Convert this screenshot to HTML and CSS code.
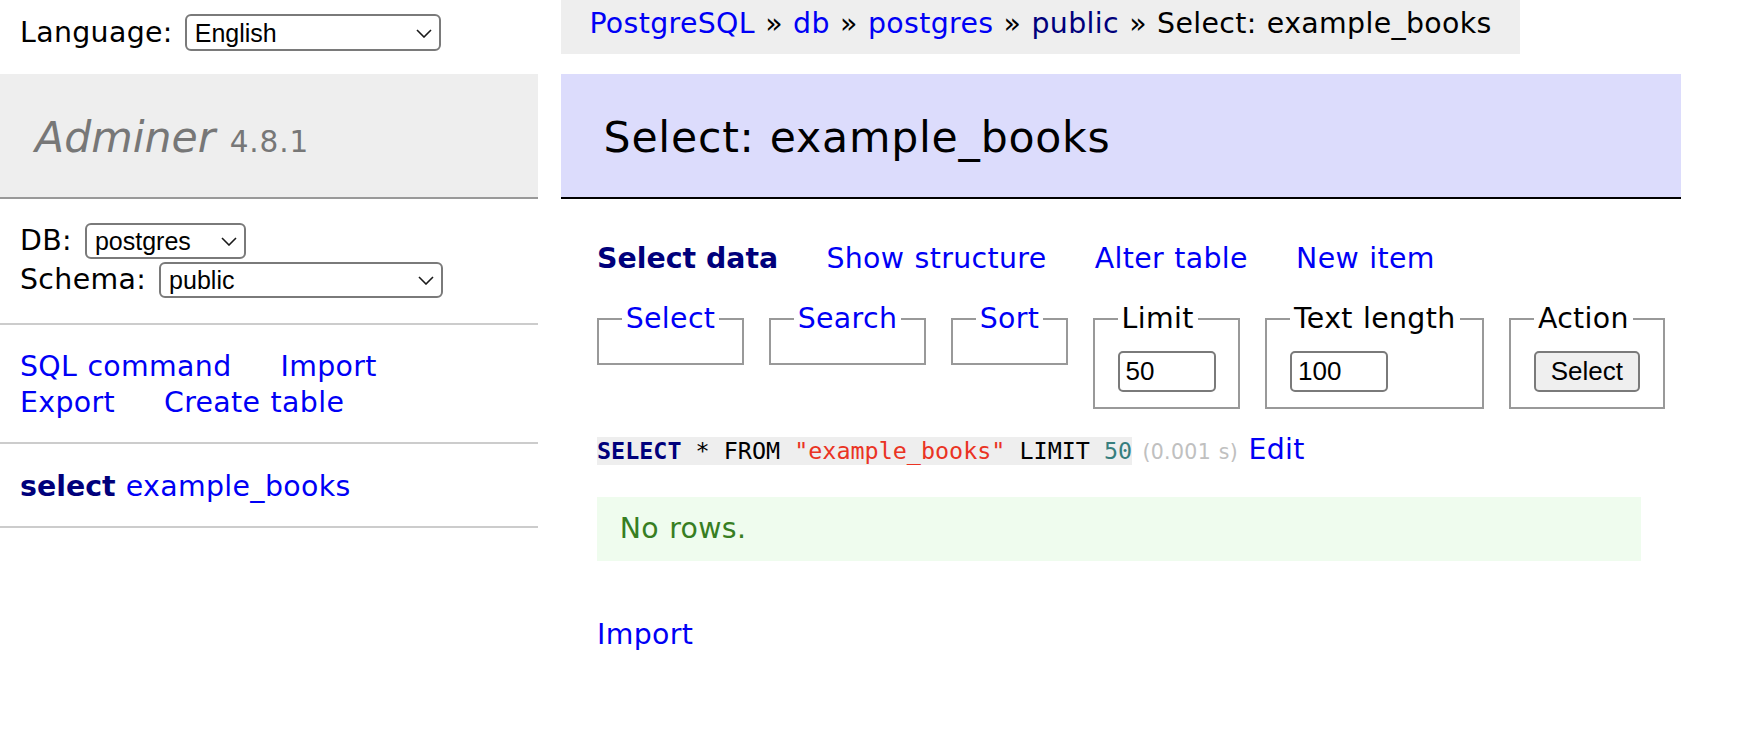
FILE: index.html
```html
<!DOCTYPE html>
<html lang="en">
<head>
<meta charset="utf-8">
<title>Select: example_books - postgres - Adminer</title>
<link rel="stylesheet" href="styles.css">
</head>
<body>
<div class="page">
  <aside class="side">
    <form class="lang">
      <label class="lang-label" for="lang">Language:</label>
      <span class="sel sel-lang">
        <select id="lang"><option>English</option></select>
        <svg class="chev" viewBox="0 0 16 9"><path d="M1 1 L8 8 L15 1"/></svg>
      </span>
    </form>
    <div class="menu">
      <h1 class="brand"><a class="brand-name" href="#">Adminer</a> <span class="version">4.8.1</span></h1>
      <form class="menu-block dbs">
        <div class="dbs-row">
          <span>DB:</span>
          <span class="sel sel-db">
            <select><option>postgres</option></select>
            <svg class="chev" viewBox="0 0 16 9"><path d="M1 1 L8 8 L15 1"/></svg>
          </span>
        </div>
        <div class="dbs-row">
          <span>Schema:</span>
          <span class="sel sel-schema">
            <select><option>public</option></select>
            <svg class="chev" viewBox="0 0 16 9"><path d="M1 1 L8 8 L15 1"/></svg>
          </span>
        </div>
      </form>
      <div class="menu-block">
        <div class="menu-links">
          <a href="#">SQL command</a>
          <a href="#">Import</a>
          <a href="#">Export</a>
          <a href="#">Create table</a>
        </div>
      </div>
      <div class="menu-block tables">
        <a href="#" class="active visited">select</a> <a href="#">example_books</a>
      </div>
    </div>
  </aside>
  <main class="main">
    <p class="breadcrumb"><a href="#">PostgreSQL</a> &raquo; <a href="#">db</a> &raquo; <a href="#">postgres</a> &raquo; <a href="#" class="visited">public</a> &raquo; Select: example_books</p>
    <h2 class="title">Select: example_books</h2>
    <div class="inner">
      <p class="tabs"><a href="#" class="active visited">Select data</a> <a href="#">Show structure</a> <a href="#">Alter table</a> <a href="#">New item</a></p>
      <form class="select-form">
        <fieldset class="fs fs-empty"><legend><a href="#">Select</a></legend></fieldset>
        <fieldset class="fs fs-empty"><legend><a href="#">Search</a></legend></fieldset>
        <fieldset class="fs fs-empty"><legend><a href="#">Sort</a></legend></fieldset>
        <fieldset class="fs"><legend>Limit</legend><input type="text" class="size" value="50"></fieldset>
        <fieldset class="fs"><legend>Text length</legend><input type="text" class="size" value="100"></fieldset>
        <fieldset class="fs"><legend>Action</legend><input type="submit" class="btn" value="Select"></fieldset>
      </form>
      <p class="sql"><code class="code"><a href="#" class="kw">SELECT</a> * FROM <span class="quo">"example_books"</span> LIMIT <span class="num">50</span></code> <span class="time">(0.001 s)</span> <a href="#">Edit</a></p>
      <p class="message">No rows.</p>
      <div class="import"><a href="#">Import</a></div>
    </div>
  </main>
</div>
</body>
</html>
```

FILE: styles.css
```css
html, body {
  margin: 0;
  padding: 0;
}

body {
  font-family: "DejaVu Sans", Verdana, sans-serif;
  font-size: 28.4px;
  line-height: 36px;
  letter-spacing: 0.012em;
  word-spacing: 0.03em;
  color: #000;
  background: #fff;
}

a {
  color: #0000f5;
  text-decoration: none;
}

a.visited {
  color: #00007b;
}

.active {
  font-weight: bold;
  letter-spacing: 0;
  word-spacing: 0;
}

.page {
  display: grid;
  grid-template-columns: 561px 1120px;
  align-items: start;
}

/* ---------- left column ---------- */

.lang {
  display: flex;
  align-items: center;
  gap: 12px;
  height: 37px;
  padding: 14px 20px 23px;
  margin: 0;
}

.sel {
  position: relative;
  display: inline-block;
}

.sel select {
  -webkit-appearance: none;
  appearance: none;
  box-sizing: border-box;
  display: block;
  height: 36px;
  margin: 0;
  padding: 0 30px 0 8px;
  border: 2px solid #7a7a7a;
  border-radius: 6px;
  background: #fff;
  color: #000;
  font-family: "Liberation Sans", Arial, sans-serif;
  font-size: 25px;
  letter-spacing: 0;
}

.sel-lang select {
  width: 256px;
  height: 37px;
}

.sel-db select {
  width: 161px;
}

.sel-schema select {
  width: 284px;
}

.chev {
  position: absolute;
  right: 9px;
  top: 50%;
  width: 16px;
  height: 9px;
  margin-top: -4px;
  fill: none;
  stroke: #1a1a1a;
  stroke-width: 1.6;
}

.menu {
  width: 538px;
}

.brand {
  margin: 0;
  padding: 37px 20px 33px 35px;
  background: #eee;
  border-bottom: 2px solid #999;
  font-size: 42.6px;
  line-height: 53.25px;
  font-weight: normal;
  letter-spacing: 0;
}

.brand-name {
  color: #777;
  font-style: italic;
}

.version {
  color: #777;
  font-size: 29.5px;
  line-height: 20px;
  letter-spacing: 0.03em;
}

.menu-block {
  margin: 0;
  padding: 24.5px 20px 21px;
  border-bottom: 2px solid #ccc;
}

.dbs {
  padding-top: 22.7px;
  padding-bottom: 22.7px;
}

.dbs-row {
  display: flex;
  align-items: center;
  gap: 13px;
  height: 39px;
}

.menu-links {
  display: flex;
  flex-wrap: wrap;
  column-gap: 49px;
  max-width: 470px;
}

.menu-links a {
  white-space: nowrap;
}

/* ---------- right column ---------- */

.main {
  min-width: 0;
}

.breadcrumb {
  width: fit-content;
  margin: 0 0 20px;
  height: 54px;
  padding: 0 28.4px;
  line-height: 47px;
  background: #eee;
  white-space: nowrap;
}

.title {
  margin: 0;
  padding: 37px 42.6px 33px;
  background: #dcdcfc;
  border-bottom: 2px solid #000;
  font-size: 42.6px;
  line-height: 53.25px;
  font-weight: normal;
  letter-spacing: 0.018em;
}

.inner {
  padding-left: 36px;
}

.tabs {
  margin: 42px 0 0;
}

.tabs a {
  margin-right: 38px;
  white-space: nowrap;
}

.select-form {
  display: flex;
  align-items: flex-start;
  gap: 25px;
  margin: 24px 0 0;
}

.fs {
  margin: 0;
  padding: 14.2px 22.7px;
  border: 2px solid #999;
  min-width: 0;
}

.fs-empty {
  padding-bottom: 12px;
}

.fs legend {
  padding: 0 4px;
  line-height: 36px;
}

.size {
  display: block;
  box-sizing: border-box;
  width: 98px;
  height: 41px;
  margin: 0;
  padding: 0 6px;
  border: 2px solid #7a7a7a;
  border-radius: 5px;
  background: #fff;
  font-family: "Liberation Sans", Arial, sans-serif;
  font-size: 26px;
  letter-spacing: 0;
  color: #000;
}

.btn {
  display: block;
  box-sizing: border-box;
  width: 106px;
  height: 41px;
  margin: 0;
  padding: 0;
  border: 2px solid #7a7a7a;
  border-radius: 5px;
  background: #efefef;
  font-family: "Liberation Sans", Arial, sans-serif;
  font-size: 26px;
  letter-spacing: 0;
  color: #000;
}

.sql {
  margin: 23.6px 0 0;
}

.code {
  font-family: "DejaVu Sans Mono", monospace;
  font-size: 23.4px;
  letter-spacing: 0;
  word-spacing: 0;
  background: #eee;
}

.code .kw {
  color: #00007b;
  font-weight: bold;
}

.quo {
  color: #ea3323;
}

.num {
  color: #367e7e;
}

.time {
  color: #c0c0c0;
  font-size: 20.5px;
}

.message {
  margin: 27px 40px 0 0;
  padding: 14px 22.7px;
  background: #effcee;
  color: #377e22;
}

.import {
  margin-top: 56px;
}
```
